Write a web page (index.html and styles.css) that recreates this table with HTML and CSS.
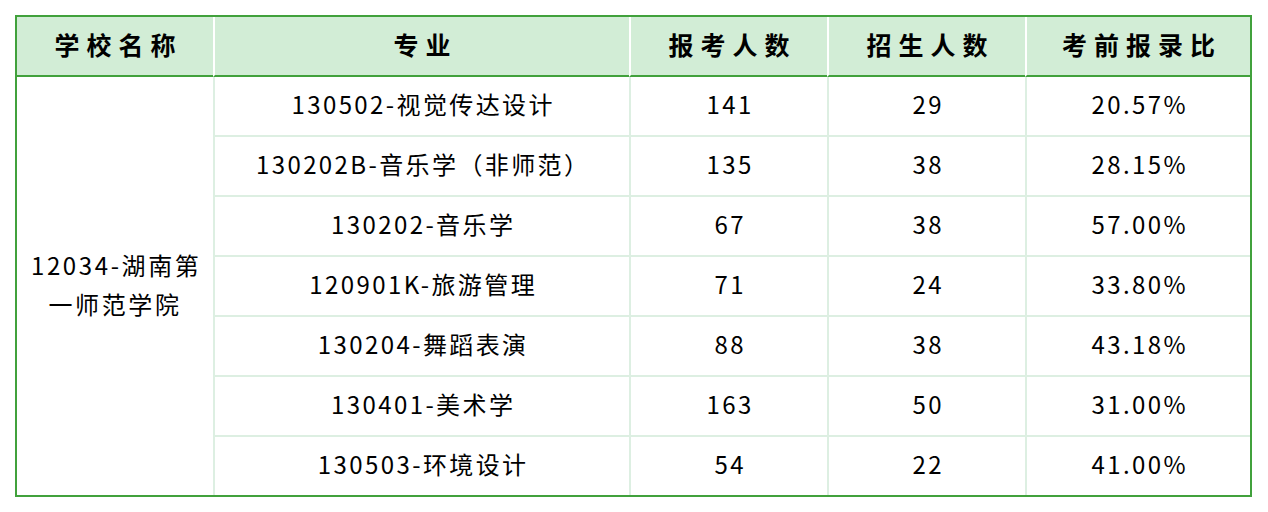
FILE: index.html
```html
<!DOCTYPE html>
<html lang="zh">
<head>
<meta charset="utf-8">
<link rel="stylesheet" href="styles.css">
</head>
<body>
<table class="data">
  <colgroup>
    <col class="c1"><col class="c2"><col class="c3"><col class="c4"><col class="c5">
  </colgroup>
  <thead>
    <tr>
      <th>学校名称</th>
      <th>专业</th>
      <th>报考人数</th>
      <th>招生人数</th>
      <th>考前报录比</th>
    </tr>
  </thead>
  <tbody>
    <tr>
      <td class="school" rowspan="7">12034-湖南第<br>一师范学院</td>
      <td>130502-视觉传达设计</td><td>141</td><td>29</td><td>20.57%</td>
    </tr>
    <tr><td>130202B-音乐学（非师范）</td><td>135</td><td>38</td><td>28.15%</td></tr>
    <tr><td>130202-音乐学</td><td>67</td><td>38</td><td>57.00%</td></tr>
    <tr><td>120901K-旅游管理</td><td>71</td><td>24</td><td>33.80%</td></tr>
    <tr><td>130204-舞蹈表演</td><td>88</td><td>38</td><td>43.18%</td></tr>
    <tr><td>130401-美术学</td><td>163</td><td>50</td><td>31.00%</td></tr>
    <tr><td>130503-环境设计</td><td>54</td><td>22</td><td>41.00%</td></tr>
  </tbody>
</table>
</body>
</html>
```
FILE: styles.css
```css
html, body {
  margin: 0;
  padding: 0;
  background: #ffffff;
}
body {
  padding: 15px 0 0 15px;
  font-family: "Noto Sans CJK SC", "Noto Sans", sans-serif;
  color: #000;
}
.data {
  border-collapse: separate;
  border-spacing: 0;
  border: 2px solid #41a13c;
  table-layout: fixed;
  width: 1237px;
}
.c1 { width: 196px; }
.c2 { width: 416px; }
.c3 { width: 198px; }
.c4 { width: 198px; }
.c5 { width: 225px; }
.data th {
  background: #d2edd6;
  height: 54px;
  padding: 0 0 4px 0;
  font-size: 25px;
  font-weight: bold;
  letter-spacing: 7px;
  text-indent: 7px;
  border-bottom: 2px solid #41a13c;
  text-align: center;
  vertical-align: middle;
  line-height: 1;
}
.data th + th {
  border-left: 2px solid #ffffff;
}
.data td {
  height: 54px;
  padding: 0 0 4px 0;
  font-size: 24px;
  letter-spacing: 2.4px;
  text-indent: 2.4px;
  text-align: center;
  vertical-align: middle;
  line-height: 1;
  border-left: 2px solid #ddefe2;
}
.data td.school {
  border-left: none;
  line-height: 39px;
  letter-spacing: 2.6px;
}
.data tbody tr + tr td {
  border-top: 2px solid #ddefe2;
}
```
